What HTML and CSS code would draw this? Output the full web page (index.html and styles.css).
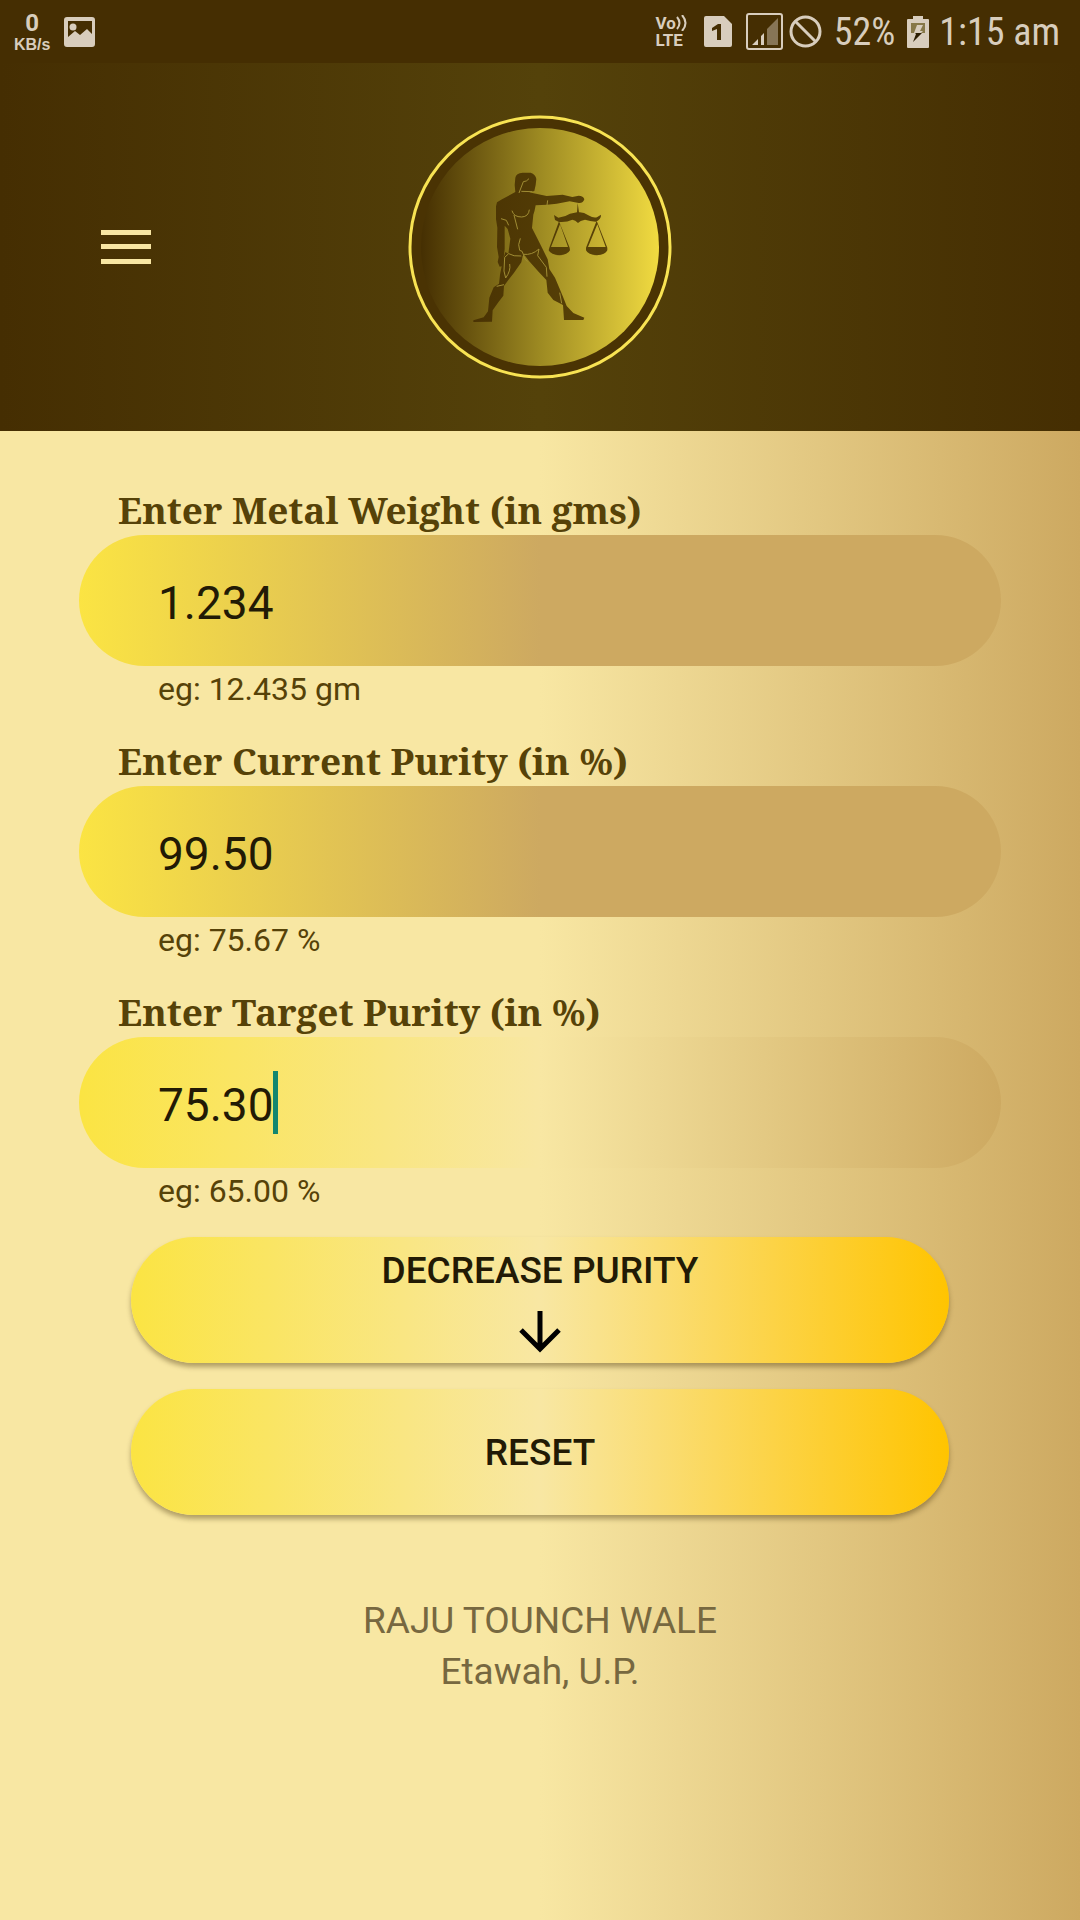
FILE: index.html
```html
<!DOCTYPE html>
<html lang="en">
<head>
<meta charset="utf-8">
<meta name="viewport" content="width=device-width, initial-scale=1">
<title>Purity Calculator</title>
<link rel="stylesheet" href="styles.css">
</head>
<body>
<div class="status-bar">
  <div class="status-group">
    <div class="net-speed"><span class="net-value">0</span><span class="net-unit">KB/s</span></div>
    <svg class="icon-picture" width="31" height="30" viewBox="0 0 31 30" aria-hidden="true">
      <path fill="currentColor" fill-rule="evenodd" d="M3 0h25a3 3 0 0 1 3 3v24a3 3 0 0 1-3 3H3a3 3 0 0 1-3-3V3a3 3 0 0 1 3-3zM4 4v16l7-6 5 4 7-6 5 5V4z"/>
      <circle cx="9" cy="10" r="3.500" fill="currentColor"/>
    </svg>
  </div>
  <div class="status-group status-right">
    <div class="volte">
      <div class="volte-row">Vo<svg width="12" height="16" viewBox="0 0 12 16" aria-hidden="true"><path d="M1 2q5 6 0 12M6 0q7 8 0 16" fill="none" stroke="currentColor" stroke-width="2"/></svg></div>
      <div class="volte-row">LTE</div>
    </div>
    <svg class="icon-sim" width="28" height="31" viewBox="0 0 28 31" aria-hidden="true">
      <path fill="currentColor" fill-rule="evenodd" d="M2 0h18l8 8v21a2 2 0 0 1-2 2H2a2 2 0 0 1-2-2V2a2 2 0 0 1 2-2zM17 8h-3l-6 4v3l5-2v11h4z"/>
    </svg>
    <svg class="icon-signal" width="37" height="37" viewBox="0 0 37 37" aria-hidden="true">
      <rect x="1" y="1" width="35" height="35" rx="2" fill="none" stroke="currentColor" stroke-width="2"/>
      <path d="M6 32l6-6v6zM15 23l3-3v12h-3z" fill="currentColor"/>
      <path d="M21 16L32 5v27H21z" fill="currentColor" opacity=".45"/>
    </svg>
    <svg class="icon-blocked" width="33" height="33" viewBox="0 0 33 33" aria-hidden="true">
      <g fill="none" stroke="currentColor" stroke-width="3"><circle cx="16.500" cy="16.500" r="14.500"/><path d="M6 6l21 21"/></g>
    </svg>
    <span class="status-text battery-level">52%</span>
    <svg class="icon-battery" width="22" height="32" viewBox="0 0 22 32" aria-hidden="true">
      <path fill="currentColor" d="M6 0h10v3h5a1 1 0 0 1 1 1v27a1 1 0 0 1-1 1H1a1 1 0 0 1-1-1V4a1 1 0 0 1 1-1h5z"/>
      <path fill="#877848" d="M4 7h14v10H4z"/>
      <path fill="#d8cdbd" d="M10 9h6l-3 6h3l-2 2H7z"/>
      <path fill="#2b1d02" d="M8 17h7l-9 9 3-8z"/>
    </svg>
    <span class="status-text">1:15 am</span>
  </div>
</div>
<header class="header">
  <button class="menu-button" type="button" aria-label="Open menu">
    <svg width="50" height="34" viewBox="0 0 50 34" aria-hidden="true"><path fill="currentColor" d="M0 0h50v5H0zM0 14h50v5H0zM0 29h50v5H0z"/></svg>
  </button>
  <svg class="logo" viewBox="0 0 264 264" role="img" aria-label="Raju Tounch Wale">
    <defs>
      <linearGradient id="gold"><stop offset="0" stop-color="#452f02"/><stop offset=".5" stop-color="#9d8a22"/><stop offset="1" stop-color="#f1db41"/></linearGradient>
      <linearGradient id="ink" gradientUnits="userSpaceOnUse" x1="40" y1="0" x2="440" y2="0"><stop offset="0" stop-color="#4a3303"/><stop offset="1" stop-color="#5a4408"/></linearGradient>
    </defs>
    <circle cx="132" cy="132" r="130" fill="#4a3303" stroke="#f8e353" stroke-width="3"/>
    <circle cx="132" cy="132" r="119" fill="url(#gold)"/>
    <g transform="translate(52 45) scale(.33333)" fill="url(#ink)">
      <path d="M166 53Q168 39 188 38H212Q227 43 229 57L227 75L223 93L208 97L221 100L260 108L308 104L337 111L356 107Q370 107 373 118Q370 130 356 129L329 124L290 131L261 134L227 136Q224 154 220 164L216 204L234 239L246 263L263 298L268 327L285 353L298 384L308 408L320 438L340 459L373 473L370 480H312L309 435L299 430L280 420L263 398L259 360L237 337L207 303L194 286L188 288L184 307L161 340L145 360L132 378L130 407L115 427L98 451L96 485L40 486V481L71 472L84 454L88 413L101 382L117 371L120 344L125 319L119 320L113 306L116 291L111 261L112 203L108 178V139L111 127L126 118L166 96L164 75ZM134 197V267L131 293L136 276L145 281L151 236L143 207Z"/>
      <g fill="none" stroke="#a08d34" stroke-width="3">
        <path d="M207 56L199 63L190 65L177 99M184 94L217 95M156 152Q161 171 185 171Q206 170 208 149M162 165L173 208M123 176L139 181L146 196M181 235Q172 255 179 271Q188 271 190 283Q193 300 203 304M190 283Q216 286 237 267M237 267L233 287L259 322L261 350M146 281L134 292L132 333L137 354Q153 332 149 312M146 281Q160 290 184 288M110 379L132 374M263 121L261 136M299 398L305 430"/>
      </g>
      <path d="M353 129L357 157Q371 156 385 166Q403 176 412 171L423 164Q424 178 407 185Q390 183 375 179Q360 182 354 189Q346 180 337 179Q320 188 297 186L285 180L282 165L295 173Q315 171 330 161L351 157Z"/>
      <path d="M297 184L268 263L266 271Q273 285 298 286Q323 285 330 271L329 263ZM300 193L324 261H273ZM410 182L378 263V271Q384 285 411 286Q436 284 442 271V263ZM412 193L437 261H384Z" fill-rule="evenodd"/>
    </g>
  </svg>
</header>
<main class="content">
  <form class="form">
    <div class="field">
      <label for="weight">Enter Metal Weight (in gms)</label>
      <div class="input-wrap"><input id="weight" type="text" inputmode="decimal" value="1.234" aria-describedby="weight-hint"></div>
      <p class="hint" id="weight-hint">eg: 12.435 gm</p>
    </div>
    <div class="field">
      <label for="current">Enter Current Purity (in %)</label>
      <div class="input-wrap"><input id="current" type="text" inputmode="decimal" value="99.50" aria-describedby="current-hint"></div>
      <p class="hint" id="current-hint">eg: 75.67 %</p>
    </div>
    <div class="field field-active">
      <label for="target">Enter Target Purity (in %)</label>
      <div class="input-wrap"><input id="target" type="text" inputmode="decimal" value="75.30" aria-describedby="target-hint"><span class="caret"></span></div>
      <p class="hint" id="target-hint">eg: 65.00 %</p>
    </div>
    <div class="actions">
      <button class="action" type="button">DECREASE PURITY
        <svg width="42" height="42" viewBox="0 0 42 42" aria-hidden="true"><path d="M21 0v38M2 19l19 19 19-19" fill="none" stroke="#000" stroke-width="5"/></svg>
      </button>
      <button class="action" type="reset">RESET</button>
    </div>
  </form>
  <footer class="footer">
    <p>RAJU TOUNCH WALE</p>
    <p>Etawah, U.P.</p>
  </footer>
</main>
</body>
</html>
```
FILE: styles.css
```css
* { box-sizing: border-box; }

body {
  margin: 0;
  min-height: 100vh;
  display: flex;
  flex-direction: column;
  font-family: Roboto, sans-serif;
  color: #564208;
}

p { margin: 0; }
svg { display: block; flex: none; }
button { border: 0; font: inherit; color: inherit; cursor: pointer; }

.status-bar {
  height: 63px;
  padding: 0 20px 0 14px;
  display: flex;
  justify-content: space-between;
  background: #452e02;
  color: #d8cdbd;
}

.status-group { display: flex; align-items: center; gap: 14px; }
.status-right { gap: 6px; }

.net-speed {
  display: flex;
  flex-direction: column;
  align-items: center;
  font-weight: 700;
}
.net-value { font-size: 24px; line-height: 26px; }
.net-unit { font-size: 16px; line-height: 18px; font-family: "Liberation Sans", sans-serif; }

.volte {
  font-size: 17px;
  font-weight: 700;
  line-height: 17px;
}
.volte-row { display: flex; align-items: center; }

.icon-sim { margin: 0 8px 0 10px; }
.icon-battery { margin-right: 4px; }
.status-text {
  font-family: "Roboto Condensed", "Liberation Sans Narrow", Roboto, sans-serif;
  font-size: 38px;
  line-height: 48px;
  white-space: nowrap;
}
.battery-level { margin: 0 6px; }

.header {
  height: 368px;
  display: grid;
  grid-template-columns: 1fr 264px 1fr;
  align-items: center;
  background: linear-gradient(90deg, #452e02, #54420a 50%, #452e02);
}

.menu-button {
  justify-self: start;
  margin-left: 101px;
  padding: 0;
  background: none;
  color: #f8e6a3;
}

.logo { width: 264px; height: 264px; }

.content {
  flex: 1;
  padding: 56px 79px 0;
  background: linear-gradient(90deg, #f8e7a3, #f8e7a3 50%, #cda961);
}

.field + .field { margin-top: 26px; }

.field label {
  display: block;
  height: 48px;
  margin-left: 39px;
  font-family: "Noto Serif", "Liberation Serif", serif;
  font-size: 37px;
  font-weight: 700;
  line-height: 46px;
  white-space: nowrap;
}

.input-wrap { position: relative; }

.field input {
  display: block;
  width: 100%;
  height: 131px;
  padding: 4px 79px 0;
  border: 0;
  border-radius: 66px;
  outline: 0;
  background: linear-gradient(90deg, #fbe443, #cda961 50%, #cda961);
  font: 46px Roboto, sans-serif;
  color: #221a05;
}

.field-active input { background: linear-gradient(90deg, #fbe443, #f8e7a3 50%, #cda961); }

.caret {
  position: absolute;
  left: 194px;
  top: 34px;
  width: 5px;
  height: 63px;
  background: #13866f;
}

.hint {
  margin-left: 79px;
  font-size: 32px;
  line-height: 46px;
}

.actions {
  margin-top: 23px;
  display: flex;
  flex-direction: column;
  gap: 26px;
  padding: 0 52px;
}

.action {
  height: 126px;
  padding: 2px 0 0;
  display: flex;
  flex-direction: column;
  align-items: center;
  justify-content: center;
  gap: 18px;
  border-radius: 63px;
  background: linear-gradient(90deg, #fbe443, #f8e7a3 50%, #ffc400);
  box-shadow: 0 4px 5px rgba(70, 50, 10, .4);
  font-size: 37px;
  font-weight: 500;
  line-height: 44px;
  color: #221a05;
}

.footer {
  padding-top: 80px;
  text-align: center;
  font-size: 37px;
  line-height: 51px;
  color: #776840;
}
```
